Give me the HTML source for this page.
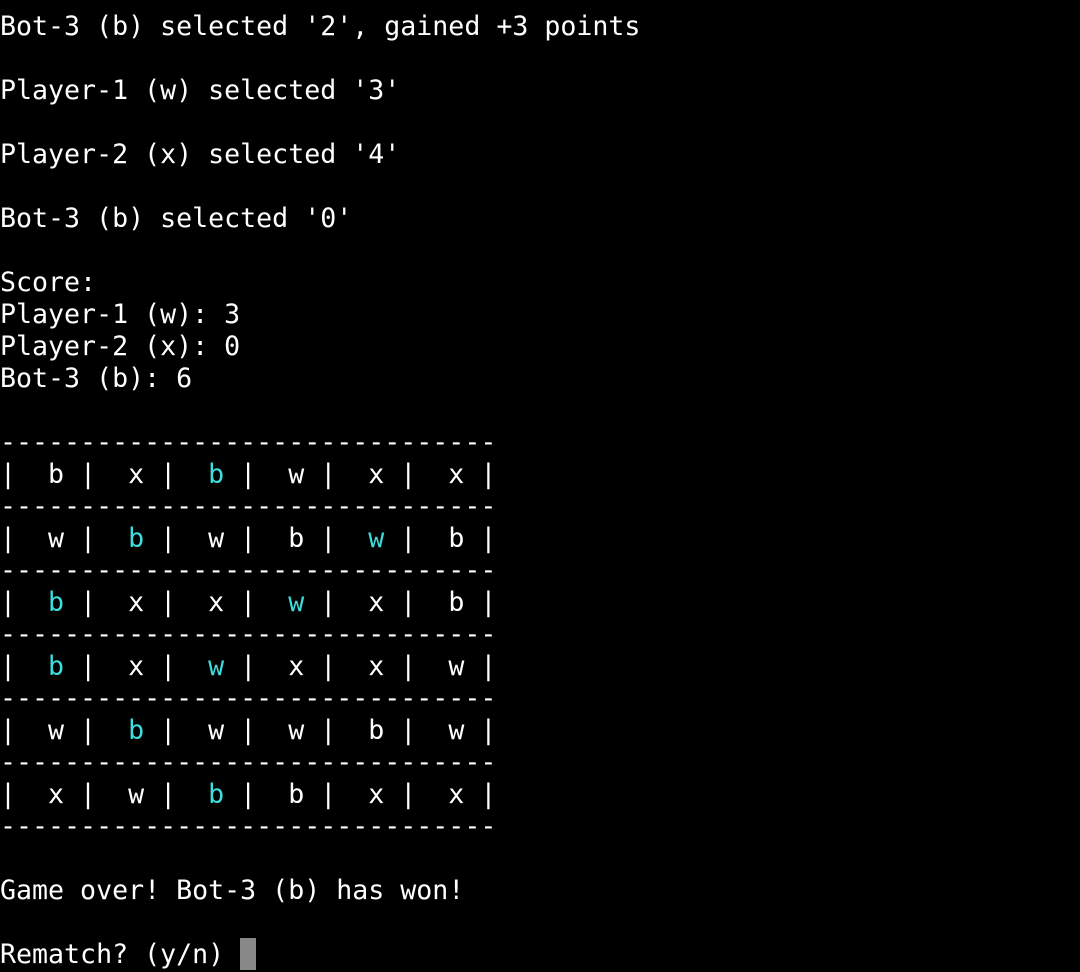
<!DOCTYPE html>
<html><head><meta charset="utf-8"><style>
html,body{margin:0;padding:0;background:#000;width:1080px;height:972px;overflow:hidden}
pre{margin:0;padding-top:11px;font-family:"DejaVu Sans Mono","Liberation Mono",monospace;font-size:26.6px;line-height:32px;color:#fff;letter-spacing:0}
.c{color:#3fdcdc}
.cur{display:inline-block;width:16px;height:32px;background:#888;vertical-align:top;position:relative;top:-1px}
</style></head><body><pre>Bot-3 (b) selected '2', gained +3 points

Player-1 (w) selected '3'

Player-2 (x) selected '4'

Bot-3 (b) selected '0'

Score:
Player-1 (w): 3
Player-2 (x): 0
Bot-3 (b): 6

-------------------------------
|  b |  x |  <span class="c">b</span> |  w |  x |  x |
-------------------------------
|  w |  <span class="c">b</span> |  w |  b |  <span class="c">w</span> |  b |
-------------------------------
|  <span class="c">b</span> |  x |  x |  <span class="c">w</span> |  x |  b |
-------------------------------
|  <span class="c">b</span> |  x |  <span class="c">w</span> |  x |  x |  w |
-------------------------------
|  w |  <span class="c">b</span> |  w |  w |  b |  w |
-------------------------------
|  x |  w |  <span class="c">b</span> |  b |  x |  x |
-------------------------------

Game over! Bot-3 (b) has won!

Rematch? (y/n) <span class="cur"></span></pre></body></html>
